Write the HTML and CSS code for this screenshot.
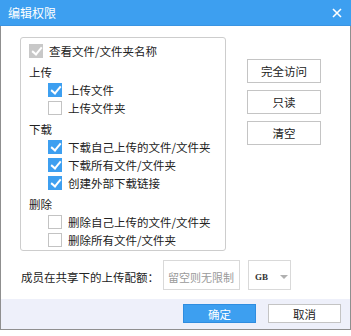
FILE: index.html
```html
<!DOCTYPE html>
<html>
<head>
    <title>编辑权限</title>
    <link rel="stylesheet" href="styles.css">
</head>
<body>
    <div class="dialog">
        <div class="titlebar">
            <span class="title">编辑权限</span>
            <svg class="close" width="10" height="10" viewBox="0 0 10 10">
                <path d="M1 1 L9 9 M9 1 L1 9" stroke="#ffffff" stroke-width="1.6" fill="none"/>
            </svg>
        </div>

        <div class="content">
            <div class="perm-box">
                <label class="row">
                    <span class="check disabled"></span>查看文件/文件夹名称
                </label>

                <div class="section">上传</div>
                <label class="row sub"><span class="check on"></span>上传文件</label>
                <label class="row sub"><span class="check"></span>上传文件夹</label>

                <div class="section">下载</div>
                <label class="row sub"><span class="check on"></span>下载自己上传的文件/文件夹</label>
                <label class="row sub"><span class="check on"></span>下载所有文件/文件夹</label>
                <label class="row sub"><span class="check on"></span>创建外部下载链接</label>

                <div class="section">删除</div>
                <label class="row sub"><span class="check"></span>删除自己上传的文件/文件夹</label>
                <label class="row sub"><span class="check"></span>删除所有文件/文件夹</label>
            </div>

            <div class="actions">
                <button class="btn">完全访问</button>
                <button class="btn">只读</button>
                <button class="btn">清空</button>
            </div>
        </div>

        <div class="quota">
            <span class="quota-label">成员在共享下的上传配额：</span>
            <div class="quota-input">留空则无限制</div>
            <div class="unit">
                <span class="unit-text">GB</span>
                <span class="arrow"></span>
            </div>
        </div>

        <div class="footer">
            <button class="btn primary">确定</button>
            <button class="btn">取消</button>
        </div>
    </div>
</body>
</html>
```

FILE: styles.css
```css
body {
    margin: 0;
    background-color: #ffffff;
    font-family: "Noto Sans CJK SC", "Liberation Sans", sans-serif;
    font-size: 11.5px;
    color: #222222;
}

.dialog {
    width: 349px;
    height: 329px;
    border-left: 1px solid #8f8f8f;
    border-right: 1px solid #8f8f8f;
    border-bottom: 1px solid #8f8f8f;
    background-color: #ffffff;
    display: flex;
    flex-direction: column;
}

.titlebar {
    height: 26px;
    margin: 0 -1px;
    padding: 0 9px 0 8px;
    background-color: #3d9ff0;
    border-bottom: 1px solid #3a94e2;
    display: flex;
    align-items: center;
    justify-content: space-between;
    box-sizing: border-box;
}

.title {
    color: #ffffff;
    font-size: 12px;
}

.content {
    display: flex;
    padding: 11px 0 0 19px;
}

.perm-box {
    width: 196px;
    height: 208px;
    padding: 4px 0 0 8px;
    border: 1px solid #cdcdcd;
    border-radius: 3px;
    box-sizing: content-box;
}

.row {
    display: flex;
    align-items: center;
    height: 18px;
}

.row.sub {
    padding-left: 19px;
}

.section {
    height: 18px;
    line-height: 18px;
    margin-top: 3px;
}

.check {
    width: 12px;
    height: 12px;
    margin-right: 6px;
    border: 1px solid #c3c3c3;
    background-color: #ffffff;
    position: relative;
    flex-shrink: 0;
}

.check.on,
.check.disabled {
    border-color: transparent;
}

.check.on {
    background-color: #3d9ff0;
}

.check.disabled {
    background-color: #c8c8c8;
}

.check.on::after,
.check.disabled::after {
    content: "";
    position: absolute;
    left: 4px;
    top: 0px;
    width: 4px;
    height: 8px;
    border-right: 2px solid #ffffff;
    border-bottom: 2px solid #ffffff;
    transform: rotate(40deg);
}

.actions {
    display: flex;
    flex-direction: column;
    gap: 7px;
    margin: 22px 0 0 21px;
}

.btn {
    width: 74px;
    height: 24px;
    padding: 0;
    border: 1px solid #c4c4c4;
    background-color: #ffffff;
    font-family: inherit;
    font-size: 11.5px;
    color: #222222;
}

.quota {
    display: flex;
    align-items: center;
    margin-top: 9px;
    padding-left: 20px;
    height: 30px;
}

.quota-label {
    width: 142px;
    white-space: nowrap;
    padding-top: 4px;
}

.quota-input {
    width: 71px;
    height: 28px;
    line-height: 32px;
    padding-left: 4px;
    border: 1px solid #d9d9d9;
    color: #9a9a9a;
    font-size: 11px;
    white-space: nowrap;
}

.unit {
    width: 41px;
    height: 25px;
    margin-left: 8px;
    padding-top: 3px;
    border: 1px solid #d9d9d9;
    display: flex;
    align-items: center;
}

.unit-text {
    font-size: 9px;
    font-family: "Liberation Serif", serif;
    font-weight: bold;
    margin-left: 6px;
    color: #333333;
}

.arrow {
    margin-left: 12px;
    width: 0;
    height: 0;
    border-left: 4px solid transparent;
    border-right: 4px solid transparent;
    border-top: 4px solid #b0b0b0;
}

.footer {
    margin-top: auto;
    height: 30px;
    background-color: #eef0fa;
    display: flex;
    justify-content: flex-end;
    align-items: flex-start;
    gap: 12px;
    padding: 5px 9px 0 0;
    box-sizing: border-box;
}

.footer .btn {
    width: 73px;
    height: 19px;
}

.btn.primary {
    background-color: #3d9ff0;
    border-color: #2f8de0;
    color: #ffffff;
}
```
